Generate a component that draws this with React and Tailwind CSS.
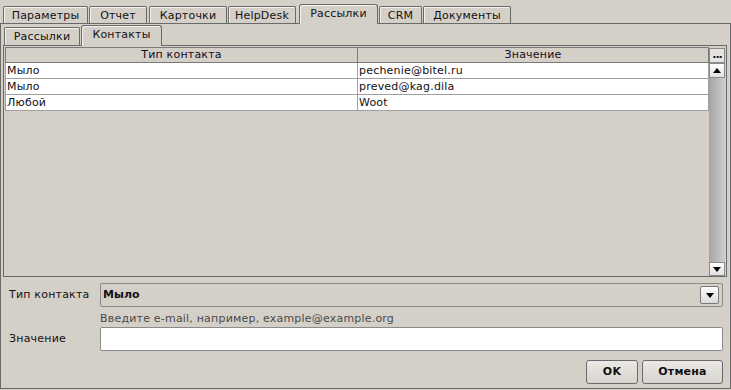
import React from "react";

const Tri = ({ up }) => (
  <svg width="8" height="5" viewBox="0 0 8 5" className="block">
    {up ? <path d="M0 5 L4 0 L8 5 Z" fill="#000" /> : <path d="M0 0 L8 0 L4 5 Z" fill="#000" />}
  </svg>
);

const topTabs = [
  { label: "Параметры", w: "w-[85px]", ml: "ml-[3px]" },
  { label: "Отчет", w: "w-[58px]", ml: "ml-[1px]" },
  { label: "Карточки", w: "w-[78px]", ml: "ml-[2px]" },
  { label: "HelpDesk", w: "w-[68px]", ml: "ml-[1px]" },
  { label: "Рассылки", w: "w-[79px]", ml: "ml-[3px]", active: true },
  { label: "CRM", w: "w-[43px]", ml: "ml-[1px]" },
  { label: "Документы", w: "w-[88px]", ml: "ml-[1px]" },
];

const rows = [
  ["Мыло", "pechenie@bitel.ru"],
  ["Мыло", "preved@kag.dila"],
  ["Любой", "Woot"],
];

export default function App() {
  return (
    <div className="w-[731px] h-[390px] bg-[#d4d0c8] flex flex-col pb-[1px] text-[11px] tracking-[0.2px] text-[#141014] font-['DejaVu_Sans',sans-serif] overflow-hidden">
      {/* top tabs */}
      <div className="flex items-end h-[23px] shrink-0">
        {topTabs.map((t) =>
          t.active ? (
            <div
              key={t.label}
              className={`${t.w} ${t.ml} relative z-10 h-[20px] -mb-px bg-[#d4d0c8] border border-b-0 border-[#6a6a6a] rounded-t-[3px] shadow-[inset_1px_1px_0_#f4f2ee] flex justify-center pt-[2px] leading-[13px]`}
            >
              {t.label}
            </div>
          ) : (
            <div
              key={t.label}
              className={`${t.w} ${t.ml} h-[17px] bg-[#d4d0c8] border border-b-0 border-[#6a6a6a] rounded-t-[2px] shadow-[inset_1px_1px_0_#f4f2ee] flex items-center justify-center leading-[13px]`}
            >
              {t.label}
            </div>
          )
        )}
      </div>

      {/* outer panel */}
      <div className="flex-1 border border-[#6a6a6a] flex flex-col min-h-0">
        {/* sub tabs */}
        <div className="flex items-end h-[21px] shrink-0">
          <div className="ml-[3px] w-[76px] h-[18px] border border-b-0 border-[#6a6a6a] rounded-t-[2px] shadow-[inset_1px_1px_0_#f4f2ee] flex items-center justify-center leading-[13px]">
            Рассылки
          </div>
          <div className="ml-[1px] w-[81px] h-[21px] -mb-px relative z-10 bg-[#d4d0c8] border border-b-0 border-[#6a6a6a] rounded-t-[3px] shadow-[inset_1px_1px_0_#f4f2ee] flex justify-center pt-[2px] leading-[13px]">
            Контакты
          </div>
        </div>

        {/* inner panel with table */}
        <div className="ml-[2px] mr-[3px] h-[232px] shrink-0 border border-[#6a6a6a] flex pt-[1px] pl-[1px] pr-[1px]">
          <div className="flex-1 flex flex-col">
            <div className="flex h-[16px] border-y border-l border-[#7a7a7a] bg-[#d4d0c8] leading-[14px] text-[#1a0a1a]">
              <div className="w-[352px] border-r border-[#7a7a7a] text-center">Тип контакта</div>
              <div className="flex-1 border-r border-[#7a7a7a] text-center">Значение</div>
            </div>
            {rows.map((r, i) => (
              <div key={i} className="flex h-[16px] border-b border-l border-[#a0a0a0] bg-white leading-[15px]">
                <div className="w-[352px] border-r border-[#a0a0a0] pl-[1px]">{r[0]}</div>
                <div className="flex-1 border-r border-[#a0a0a0] pl-[1px]">{r[1]}</div>
              </div>
            ))}
            <div className="flex-1" />
          </div>
          <div className="w-[16px] flex flex-col pt-[1px]">
            <div className="h-[15px] bg-[#e6e4e0] border border-[#8a8a8a] flex items-end justify-center font-bold leading-[10px] text-[11px] tracking-[-1px]">
              <span className="mb-[2px]">...</span>
            </div>
            <div className="h-[15px] bg-gradient-to-b from-[#ffffff] to-[#e0e0e0] border border-[#8a8a8a] flex items-center justify-center">
              <Tri up />
            </div>
            <div className="flex-1 bg-gradient-to-r from-[#a4a4a4] to-[#cfcfcf]" />
            <div className="h-[14px] bg-gradient-to-b from-[#ffffff] to-[#e0e0e0] border border-[#8a8a8a] flex items-center justify-center">
              <Tri />
            </div>
          </div>
        </div>

        {/* form */}
        <div className="flex flex-col pl-[8px] pr-[7px]">
          <div className="flex items-center h-[24px] mt-[6px]">
            <div className="w-[91px]">Тип контакта</div>
            <div className="flex-1 h-[24px] border border-[#8a8a8a] rounded-[2px] bg-[#d4d0c8] flex items-center pl-[2px] pr-[3px]">
              <span className="flex-1 font-bold tracking-normal">Мыло</span>
              <div className="w-[19px] h-[18px] border border-[#7a7a7a] rounded-[2px] bg-gradient-to-b from-[#fbfbfb] to-[#dcdcdc] flex items-center justify-center">
                <Tri />
              </div>
            </div>
          </div>
          <div className="h-[20px] pl-[91px] pt-[5px] leading-[14px] text-[#4a4a4a]">
            Введите e-mail, например, example@example.org
          </div>
          <div className="flex items-center h-[24px]">
            <div className="w-[91px]">Значение</div>
            <div className="flex-1 h-[24px] border border-[#8a8a8a] rounded-[2px] bg-white" />
          </div>
          <div className="flex justify-end gap-[4px] mt-[9px]">
            <div className="w-[52px] h-[24px] border border-[#6a6a6a] rounded-[3px] bg-gradient-to-b from-[#ebe9e5] to-[#d8d5cf] flex items-center justify-center font-bold">
              OK
            </div>
            <div className="w-[81px] h-[24px] border border-[#6a6a6a] rounded-[3px] bg-gradient-to-b from-[#ebe9e5] to-[#d8d5cf] flex items-center justify-center font-bold">
              Отмена
            </div>
          </div>
        </div>
      </div>
    </div>
  );
}
